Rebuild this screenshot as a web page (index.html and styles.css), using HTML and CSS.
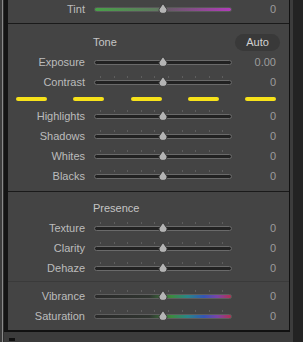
FILE: index.html
```html
<!DOCTYPE html>
<html lang="en">
<head>
  <meta charset="UTF-8">
  <meta name="viewport" content="width=device-width, initial-scale=1.0">
  <title>Basic panel</title>
  <link rel="stylesheet" href="styles.css">
</head>
<body>
  <div class="screen">
    <div class="edge"></div>
    <div class="column">
      <div class="panel">
        <!-- 前のセクションの最後 -->
        <section class="group group-top">
          <div class="row">
            <span class="label">Tint</span>
            <div class="slider slider-tint">
              <div class="track"></div>
              <svg class="thumb" viewBox="0 0 10 11" width="10" height="11"><path d="M5 0.6 L8.9 6.2 Q9.4 10.4 5 10.4 Q0.6 10.4 1.1 6.2 Z"/></svg>
            </div>
            <span class="value">0</span>
          </div>
        </section>

        <!-- Tone -->
        <section class="group group-tone">
          <div class="heading">
            <span class="heading-title">Tone</span>
            <button class="auto">Auto</button>
          </div>
          <div class="row">
            <span class="label">Exposure</span>
            <div class="slider">
              <div class="track"></div>
              <svg class="thumb" viewBox="0 0 10 11" width="10" height="11"><path d="M5 0.6 L8.9 6.2 Q9.4 10.4 5 10.4 Q0.6 10.4 1.1 6.2 Z"/></svg>
            </div>
            <span class="value">0.00</span>
          </div>
          <div class="row">
            <span class="label">Contrast</span>
            <div class="slider ticked">
              <div class="track"></div>
              <svg class="thumb" viewBox="0 0 10 11" width="10" height="11"><path d="M5 0.6 L8.9 6.2 Q9.4 10.4 5 10.4 Q0.6 10.4 1.1 6.2 Z"/></svg>
            </div>
            <span class="value">0</span>
          </div>
          <div class="dashes">
            <span></span><span></span><span></span><span></span><span></span>
          </div>
          <div class="row">
            <span class="label">Highlights</span>
            <div class="slider ticked">
              <div class="track"></div>
              <svg class="thumb" viewBox="0 0 10 11" width="10" height="11"><path d="M5 0.6 L8.9 6.2 Q9.4 10.4 5 10.4 Q0.6 10.4 1.1 6.2 Z"/></svg>
            </div>
            <span class="value">0</span>
          </div>
          <div class="row">
            <span class="label">Shadows</span>
            <div class="slider ticked">
              <div class="track"></div>
              <svg class="thumb" viewBox="0 0 10 11" width="10" height="11"><path d="M5 0.6 L8.9 6.2 Q9.4 10.4 5 10.4 Q0.6 10.4 1.1 6.2 Z"/></svg>
            </div>
            <span class="value">0</span>
          </div>
          <div class="row">
            <span class="label">Whites</span>
            <div class="slider ticked">
              <div class="track"></div>
              <svg class="thumb" viewBox="0 0 10 11" width="10" height="11"><path d="M5 0.6 L8.9 6.2 Q9.4 10.4 5 10.4 Q0.6 10.4 1.1 6.2 Z"/></svg>
            </div>
            <span class="value">0</span>
          </div>
          <div class="row">
            <span class="label">Blacks</span>
            <div class="slider ticked">
              <div class="track"></div>
              <svg class="thumb" viewBox="0 0 10 11" width="10" height="11"><path d="M5 0.6 L8.9 6.2 Q9.4 10.4 5 10.4 Q0.6 10.4 1.1 6.2 Z"/></svg>
            </div>
            <span class="value">0</span>
          </div>
        </section>

        <!-- Presence -->
        <section class="group group-presence">
          <div class="heading">
            <span class="heading-title">Presence</span>
          </div>
          <div class="row">
            <span class="label">Texture</span>
            <div class="slider ticked">
              <div class="track"></div>
              <svg class="thumb" viewBox="0 0 10 11" width="10" height="11"><path d="M5 0.6 L8.9 6.2 Q9.4 10.4 5 10.4 Q0.6 10.4 1.1 6.2 Z"/></svg>
            </div>
            <span class="value">0</span>
          </div>
          <div class="row">
            <span class="label">Clarity</span>
            <div class="slider ticked">
              <div class="track"></div>
              <svg class="thumb" viewBox="0 0 10 11" width="10" height="11"><path d="M5 0.6 L8.9 6.2 Q9.4 10.4 5 10.4 Q0.6 10.4 1.1 6.2 Z"/></svg>
            </div>
            <span class="value">0</span>
          </div>
          <div class="row">
            <span class="label">Dehaze</span>
            <div class="slider ticked">
              <div class="track"></div>
              <svg class="thumb" viewBox="0 0 10 11" width="10" height="11"><path d="M5 0.6 L8.9 6.2 Q9.4 10.4 5 10.4 Q0.6 10.4 1.1 6.2 Z"/></svg>
            </div>
            <span class="value">0</span>
          </div>
          <div class="subgroup">
            <div class="row">
              <span class="label">Vibrance</span>
              <div class="slider ticked slider-color">
                <div class="track"></div>
                <svg class="thumb" viewBox="0 0 10 11" width="10" height="11"><path d="M5 0.6 L8.9 6.2 Q9.4 10.4 5 10.4 Q0.6 10.4 1.1 6.2 Z"/></svg>
              </div>
              <span class="value">0</span>
            </div>
            <div class="row">
              <span class="label">Saturation</span>
              <div class="slider ticked slider-color">
                <div class="track"></div>
                <svg class="thumb" viewBox="0 0 10 11" width="10" height="11"><path d="M5 0.6 L8.9 6.2 Q9.4 10.4 5 10.4 Q0.6 10.4 1.1 6.2 Z"/></svg>
              </div>
              <span class="value">0</span>
            </div>
          </div>
        </section>
      </div>
      <div class="foot"><span class="foot-mark"></span></div>
    </div>
  </div>
</body>
</html>
```

FILE: styles.css
```css
/* 基本スタイル */
body {
  margin: 0;
  background-color: #232323;
  font-family: "Liberation Sans", Arial, sans-serif;
  font-size: 11px;
}
.screen {
  display: flex;
  height: 342px;
  background-color: #232323;
}
.edge {
  width: 1px;
  border-left: 2px solid #3c3c3c;
  border-right: 1px solid #2e2e2e;
  background-color: #8a8a8a;
}
.column {
  width: 289px;
  background-color: #3c3c3c;
  display: flex;
  flex-direction: column;
}

/* パネル */
.panel {
  margin-right: 3px;
  background-color: #444444;
  border-left: 4px solid #141414;
  border-right: 1px solid #111111;
  border-bottom: 2px solid #111111;
}
.group + .group {
  border-top: 1px solid #1a1a1a;
}
.group-top {
  padding-bottom: 5px;
}
.group-top .row {
  height: 18px;
}
.group-tone {
  padding: 8px 0 5px 0;
}
.group-presence {
  padding: 6px 0 4px 0;
}
.subgroup {
  margin-top: 3px;
  padding-top: 4px;
  border-top: 1px solid #3a3a3a;
}

/* 見出し */
.heading {
  display: flex;
  align-items: center;
  height: 20px;
  padding: 0 9px 0 85px;
}
.heading-title {
  flex: 1;
  font-size: 11px;
  color: #c4c4c4;
}
.auto {
  width: 45px;
  height: 17px;
  padding: 0;
  font-family: inherit;
  font-size: 11px;
  color: #d2d2d2;
  background-color: #393939;
  border: none;
  border-radius: 9px;
}

/* スライダー行 */
.row {
  display: flex;
  align-items: center;
  height: 20px;
  padding-right: 13px;
}
.label {
  width: 77px;
  text-align: right;
  color: #bcbcbc;
}
.value {
  width: 44px;
  text-align: right;
  color: #9c9c9c;
}
.slider {
  position: relative;
  width: 138px;
  height: 100%;
  margin-left: 9px;
  display: flex;
  align-items: center;
}
.track {
  flex: 1;
  height: 3px;
  background-color: #222222;
  border: 1px solid #6a6a6a;
  border-radius: 3px;
}
.ticked::before {
  content: "";
  position: absolute;
  left: 6px;
  right: 6px;
  top: calc(50% - 6px);
  height: 2px;
  background: repeating-linear-gradient(to right, #5e5e5e 0 1px, transparent 1px 13.6px);
}
.slider-tint .track {
  background: linear-gradient(to right, #48a048, #5f7a5f 45%, #6a586a 55%, #b23cba);
  border-color: #585858;
}
.slider-color .track {
  background: linear-gradient(to right, #2a2a2a, #303530 40%, #3e8a3e 56%, #2a8688 68%, #3456b4 80%, #7c44a8 90%, #b43050);
  border-color: #5e5e5e;
}
.thumb {
  position: absolute;
  left: 64px;
  top: calc(50% - 6px);
}
.thumb path {
  fill: #b4b4b4;
  stroke: #2c2c2c;
  stroke-width: 0.8;
}

/* 黄色い破線 */
.dashes {
  display: flex;
  justify-content: space-between;
  align-items: center;
  height: 14px;
  padding: 0 13px 0 8px;
}
.dashes span {
  width: 31px;
  height: 4px;
  background-color: #f7e21a;
  border-radius: 2px;
}

/* 下部 */
.foot {
  flex: 1;
}
.foot-mark {
  display: block;
  width: 6px;
  height: 3px;
  margin: 6px 0 0 5px;
  background-color: #111111;
}
```
